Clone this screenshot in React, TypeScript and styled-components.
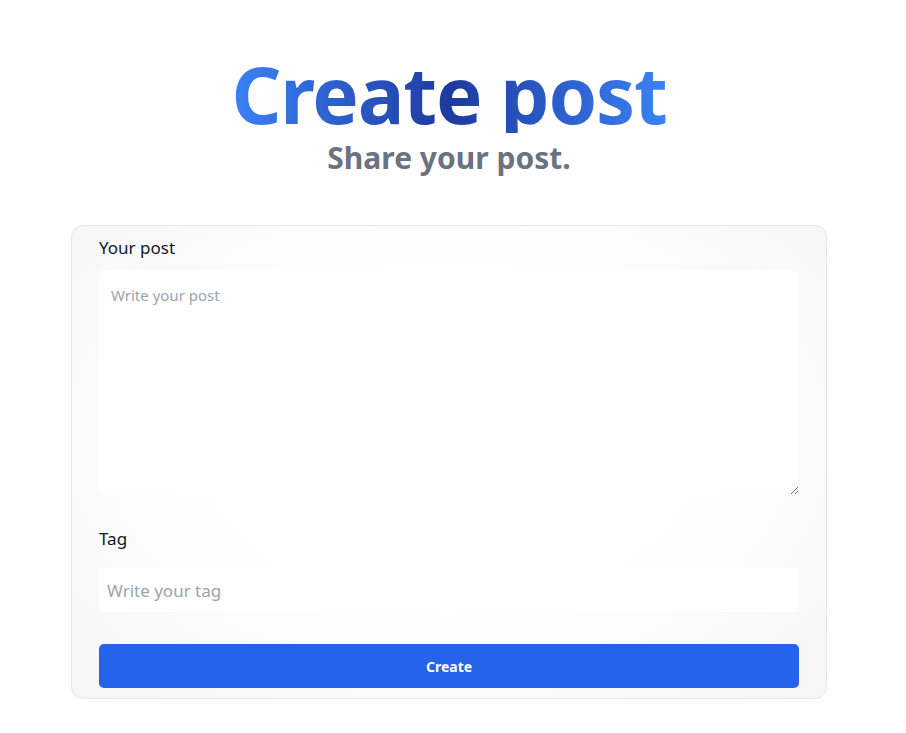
import React from "react";
import styled, { createGlobalStyle } from "styled-components";

const Global = createGlobalStyle`
  * { box-sizing: border-box; }
  body {
    margin: 0;
    background: #ffffff;
    font-family: "Noto Sans", "Open Sans", sans-serif;
  }
`;

const Page = styled.main`
  display: flex;
  flex-direction: column;
  align-items: center;
  padding: 55px 8px 32px 0;
`;

const Title = styled.h1`
  margin: 0;
  font-size: 78px;
  line-height: 1;
  font-weight: 700;
  letter-spacing: -1.2px;
  background: linear-gradient(90deg, #3b82f6 0%, #1e3a9f 50%, #3b82f6 100%);
  -webkit-background-clip: text;
  background-clip: text;
  color: transparent;
`;

const Subtitle = styled.p`
  margin: 7px 0 0;
  font-size: 30px;
  line-height: 36px;
  font-weight: 700;
  color: #6b7280;
`;

const Card = styled.form`
  margin-top: 49px;
  width: 756px;
  display: flex;
  flex-direction: column;
  padding: 10px 27px 10px;
  border: 1px solid #e5e7eb;
  border-radius: 12px;
  background: radial-gradient(ellipse at 50% 45%, #ffffff 45%, #f5f5f5 100%);
`;

const Field = styled.label<{ $gap: number; $mb: number }>`
  display: flex;
  flex-direction: column;
  gap: ${(p) => p.$gap}px;
  margin-bottom: ${(p) => p.$mb}px;
`;

const LabelText = styled.span`
  font-size: 17px;
  line-height: 24px;
  color: #111827;
`;

const TextArea = styled.textarea`
  height: 225px;
  width: 100%;
  resize: vertical;
  border: none;
  outline: none;
  border-radius: 8px;
  background: #ffffff;
  padding: 15px 12px;
  font-family: inherit;
  font-size: 15px;
  color: #374151;
  &::placeholder { color: #9ca3af; }
`;

const Input = styled.input`
  height: 44px;
  width: 100%;
  border: none;
  outline: none;
  background: #ffffff;
  padding: 0 8px;
  font-family: inherit;
  font-size: 17px;
  color: #374151;
  &::placeholder { color: #9ca3af; }
`;

const Button = styled.button`
  height: 44px;
  width: 100%;
  border: none;
  border-radius: 5px;
  background: #2563eb;
  color: #ffffff;
  font-family: inherit;
  font-size: 14px;
  font-weight: 700;
  cursor: pointer;
`;

export default function App() {
  return (
    <>
      <Global />
      <Page>
        <Title>Create post</Title>
        <Subtitle>Share your post.</Subtitle>
        <Card onSubmit={(e) => e.preventDefault()}>
          <Field $gap={10} $mb={32}>
            <LabelText>Your post</LabelText>
            <TextArea placeholder="Write your post" />
          </Field>
          <Field $gap={17} $mb={32}>
            <LabelText>Tag</LabelText>
            <Input placeholder="Write your tag" />
          </Field>
          <Button type="submit">Create</Button>
        </Card>
      </Page>
    </>
  );
}
